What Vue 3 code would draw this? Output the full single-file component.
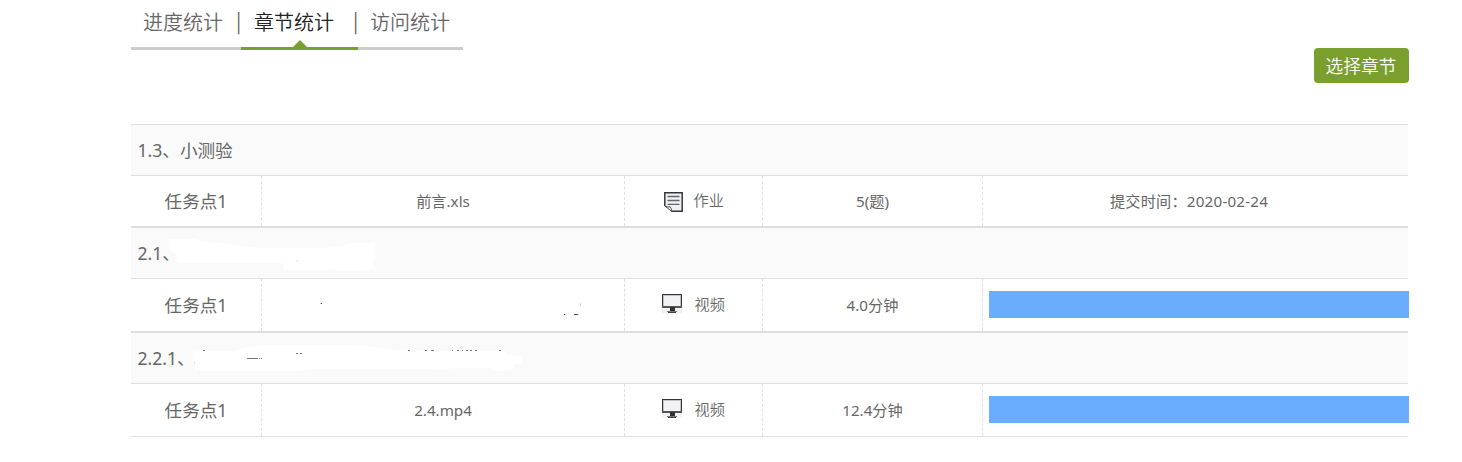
<script setup>
const tabs = [
  { label: '进度统计', key: 'progress' },
  { label: '章节统计', key: 'chapter', active: true },
  { label: '访问统计', key: 'visit' },
]
const sections = [
  { title: '1.3、小测验', file: '前言.xls', kind: 'work', type: '作业', amount: '5(题)', label: '提交时间：', date: '2020-02-24' },
  { title: '2.1、', file: '', kind: 'video', type: '视频', amount: '4.0分钟', progress: 100, smudge: 'a' },
  { title: '2.2.1、', file: '2.4.mp4', kind: 'video', type: '视频', amount: '12.4分钟', progress: 100, smudge: 'b' },
]
</script>

<template>
  <main class="page">
    <nav class="tabs">
      <a v-for="(tab, i) in tabs" :key="tab.key" class="tab" :class="[tab.key, { active: tab.active }]">
        <span v-if="i > 0" class="sep">|</span><span class="label">{{ tab.label }}</span>
      </a>
    </nav>
    <div class="toolbar"><button class="choose">选择章节</button></div>

    <section v-for="(s, i) in sections" :key="i" class="section" :class="'s' + i">
      <header class="title">
        <span>{{ s.title }}</span>
        <svg v-if="s.smudge === 'a'" class="smudge" width="1277" height="50" viewBox="131 228 1277 50">
          <path fill="#fff" d="M169 239H196L204 242L222 243L240 246L260 248L326 248L343 246L351 243H375V256L372 269L362 271H335V269L326 270H284L283 263H177V255L169 249Z" />
          <path fill="#c9f3ee" d="M296 260h2v1h-2z" />
        </svg>
        <svg v-if="s.smudge === 'b'" class="smudge" width="1277" height="50" viewBox="131 333 1277 50">
          <path fill="#fff" d="M193 352L200 351H235L247 347L262 345L350 345L373 347L397 350L440 351H506V355H512V356H522V364H513V368L506 371H496L491 368L405 369H311L300 371H195V363L193 362Z" />
          <path fill="#777" d="M203 350h2v1h-2zM247 358h11v1h-11zM259 358h1v1h-1zM261 358h1v1h-1zM296 353h2v1h-2zM300 353h2v1h-2zM408 350h2v1h-2zM425 350h2v1h-2zM431 350h3v1h-3zM452 350h1v1h-1zM457 350h2v1h-2zM462 350h1v1h-1zM466 350h2v1h-2zM470 350h2v1h-2zM475 350h2v1h-2zM499 350h2v1h-2z" />
          <path fill="#e8bd8e" d="M194 362h1v1h-1z" />
        </svg>
      </header>
      <div class="row">
        <div class="cell task">任务点1</div>
        <div class="cell file">
          <span v-if="s.file">{{ s.file }}</span>
          <svg v-else width="362" height="52" viewBox="262 279 362 52" shape-rendering="crispEdges">
            <path fill="#554a4a" d="M321 303h1v1h-1zM564 314h1v1h-1zM574 314h4v1h-4z" />
            <path fill="#f0c9a0" d="M320 303h1v1h-1zM563 314h1v1h-1z" />
            <path fill="#b8e4fa" d="M580 303h1v3h-1zM565 314h1v1h-1zM578 314h1v1h-1z" />
          </svg>
        </div>
        <div class="cell type">
          <svg v-if="s.kind === 'work'" class="icon work" width="20" height="20" viewBox="0 0 20 20">
            <path d="M1 1H18V19H7L1 13Z" fill="#eef0f3" />
            <path d="M.8 14V.8H18.2V19.2H7" fill="none" stroke="#35373b" stroke-width="1.5" />
            <path d="M.8 14L7.5 19.2Q7.8 16 6 14.8Q4 15.4 .8 14Z" fill="#eee" stroke="#55575b" stroke-width="1" />
            <path d="M4 4.5H15M4 8.5H15M4 12.3H15" stroke="#66686c" stroke-width="1.3" stroke-linecap="round" />
          </svg>
          <svg v-else class="icon video" width="20" height="19" viewBox="0 0 20 19" shape-rendering="crispEdges">
            <path d="M0 0H20V19H0Z" fill="#f1f2f5" />
            <path d="M.5 13V.5H19.5V13" fill="none" stroke="#343434" />
            <path d="M1.5 12V1.5H18.5V12" fill="none" stroke="#c9c0c0" />
            <path d="M0 12H20V14H0Z" fill="#555" />
            <path d="M8 13H13V18H8Z" fill="#303030" />
            <path d="M5 17H15V18H5Z" fill="#777" />
            <path d="M6 18H14V19H6Z" fill="#444" />
          </svg>
          <span>{{ s.type }}</span>
        </div>
        <div class="cell amount">{{ s.amount }}</div>
        <div class="cell result">
          <div v-if="s.progress" class="track"><div class="bar" :style="{ width: s.progress + '%' }"></div></div>
          <span v-else class="submitted">{{ s.label }}<span class="date">{{ s.date }}</span></span>
        </div>
      </div>
    </section>
  </main>
</template>

<style>
body { background: #fff; }
</style>

<style scoped>
.page {
  box-sizing: border-box;
  width: 1462px;
  height: 462px;
  padding-left: 131px;
  overflow: hidden;
  background: #fff;
  color: #666;
  font-family: "Noto Sans", "Noto Sans CJK SC", sans-serif;
  font-size: 15.2px;
  font-weight: 400;
}
.tabs { display: flex; height: 50px; font-family: "Noto Sans CJK SC", sans-serif; font-size: 20px; font-weight: 350; }
.tab {
  position: relative;
  box-sizing: border-box;
  display: flex;
  height: 50px;
  border-bottom: 3px solid #ccc;
  line-height: 43px;
  white-space: nowrap;
}
.progress { width: 110px; padding-left: 12px; }
.chapter { width: 117px; padding-left: 13px; }
.visit { width: 105px; padding-left: 12px; }
.active { border-color: #7a9f2f; color: #222; }
.active::after {
  content: "";
  position: absolute;
  left: 52px;
  bottom: 0;
  border: 7px solid transparent;
  border-top: 0;
  border-bottom-color: #7a9f2f;
}
.sep { position: absolute; left: -5px; top: -1px; color: #555; }
.toolbar { display: flex; justify-content: flex-end; height: 74px; padding-right: 53px; }
.choose {
  width: 95px;
  height: 35px;
  margin-top: -2px;
  padding: 0 1px 0 0;
  border: 0;
  border-radius: 4px;
  background: #7a9f2f;
  color: #fff;
  font: 350 17.7px/35px "Noto Sans CJK SC", sans-serif;
}
.section { width: 1277px; border-top: 1px solid #dfdfdf; border-bottom: 1px solid #dfdfdf; }
.title {
  position: relative;
  height: 50px;
  padding-left: 6.5px;
  box-sizing: border-box;
  background: #fafafa;
  font-size: 17.6px;
  line-height: 51px;
}
.smudge { position: absolute; left: 0; top: 0; }
.row { display: flex; height: 52px; border-top: 1px solid #dfdfdf; }
.s0 .row { height: 50px; }
.cell {
  box-sizing: border-box;
  display: flex;
  align-items: center;
  justify-content: center;
  padding-bottom: 2px;
  border-right: 1px dashed #dfdfdf;
}
.task { width: 131px; font-size: 17.6px; }
.file { width: 363px; padding-bottom: 1px; }
.s0 .file { padding-bottom: 2px; }
.file svg { flex: none; margin-bottom: -1px; }
.type { width: 138px; justify-content: flex-start; font-weight: 350; }
.amount { width: 220px; }
.result { width: 425px; border-right: 0; }
.icon { flex: none; margin-left: 37px; margin-right: 12.5px; }
.work { margin-left: 39px; margin-right: 9.5px; margin-bottom: -3px; }
.video { margin-top: -1px; }
.type span { margin-top: -3px; }
.submitted { margin-right: 13px; white-space: nowrap; letter-spacing: 0.2px; }
.track { flex: none; width: 420px; height: 27px; margin: 0 -1px 0 6px; }
.bar { height: 27px; background: #6aadff; }
</style>
